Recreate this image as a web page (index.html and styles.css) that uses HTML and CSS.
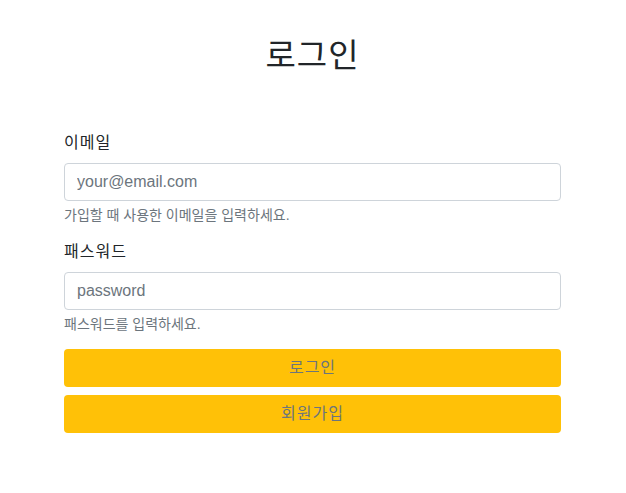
FILE: index.html
```html
<!DOCTYPE html>
<html lang="ko">
<head>
<meta charset="utf-8">
<link rel="stylesheet" href="styles.css">
</head>
<body>
<main class="page">
  <h1 class="title">로그인</h1>
  <form class="form">
    <div class="group">
      <label class="label" for="email">이메일</label>
      <input class="input" id="email" type="email" placeholder="your@email.com">
      <div class="help">가입할 때 사용한 이메일을 입력하세요.</div>
    </div>
    <div class="group">
      <label class="label" for="pw">패스워드</label>
      <input class="input" id="pw" type="password" placeholder="password">
      <div class="help">패스워드를 입력하세요.</div>
    </div>
    <button class="btn" type="button">로그인</button>
    <button class="btn" type="button">회원가입</button>
  </form>
</main>
</body>
</html>
```
FILE: styles.css
```css
* { box-sizing: border-box; }
html, body { margin: 0; padding: 0; background: #fff; }
body {
  font-family: "Liberation Sans", "Noto Sans CJK KR", sans-serif;
  color: #212529;
  font-size: 16px;
  line-height: 1.5;
}
.page {
  width: 497px;
  margin: 0 0 0 64px;
  padding-top: 37px;
}
.title {
  margin: 0 0 56px;
  font-size: 33px;
  font-weight: 400;
  line-height: 38px;
  text-align: center;
  letter-spacing: 1px;
}
.form { display: flex; flex-direction: column; }
.group { display: flex; flex-direction: column; margin-bottom: 14px; }
.label { display: block; margin-bottom: 8px; letter-spacing: 1px; }
.input {
  height: 38px;
  padding: 6px 12px;
  border: 1px solid #ced4da;
  border-radius: 4px;
  font: inherit;
  color: #212529;
}
.input::placeholder { color: #6c757d; }
.help {
  margin-top: 4px;
  font-size: 14px;
  color: #6c757d;
}
.btn {
  height: 38px;
  border: 0;
  border-radius: 4px;
  background: #ffc107;
  color: #6c757d;
  font: inherit;
  margin-bottom: 8px;
  padding: 0;
  letter-spacing: 1px;
}
```
